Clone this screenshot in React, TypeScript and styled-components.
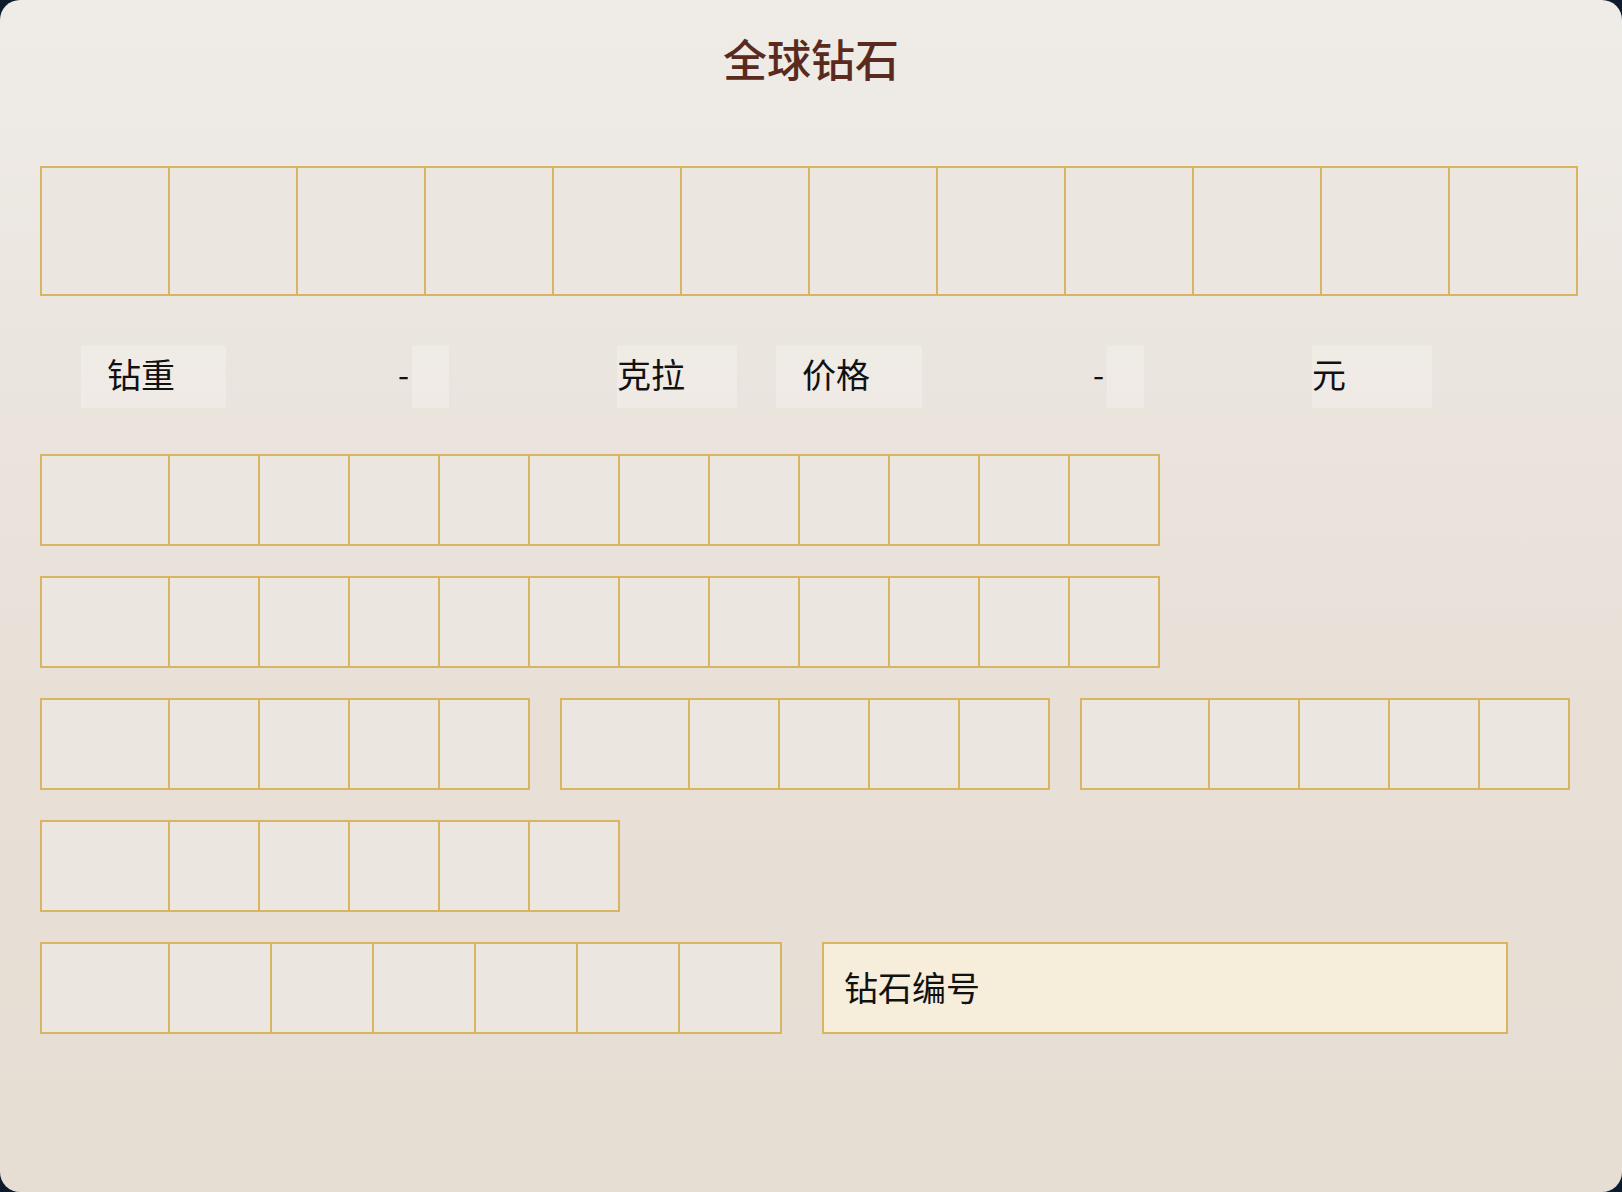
import React from "react";
import styled, { createGlobalStyle } from "styled-components";

const GlobalStyle = createGlobalStyle`
  html, body {
    margin: 0;
    padding: 0;
    background: #0e1b2d;
  }
  * { box-sizing: border-box; }
`;

const GOLD = "#d9b562";
const FONT = `"Noto Sans CJK SC", "Noto Sans", sans-serif`;

const Frame = styled.div`
  width: 1622px;
  height: 1192px;
  border-radius: 20px;
  overflow: hidden;
  background: linear-gradient(180deg, #efece7 0%, #ebe5df 30%, #e8e0d7 60%, #e6ddd3 100%);
  font-family: ${FONT};
`;

const Header = styled.header`
  height: 120px;
  padding-bottom: 4px;
  display: flex;
  align-items: center;
  justify-content: center;
`;

const Title = styled.h1`
  margin: 0;
  font-size: 44px;
  font-weight: 500;
  color: #5b2a1e;
  line-height: 1;
`;

const Board = styled.main`
  display: flex;
  flex-direction: column;
  padding: 46px 40px 0;
`;

const CellRow = styled.div<{ $mt?: number }>`
  display: flex;
  margin-top: ${(p) => p.$mt ?? 0}px;
`;

const Cell = styled.div<{ $w: number; $h: number }>`
  width: ${(p) => p.$w}px;
  height: ${(p) => p.$h}px;
  border: 2px solid ${GOLD};
  background: #ebe6e0;
  flex: none;
  & + & {
    margin-left: -2px;
  }
`;

const FilterBar = styled.div`
  display: flex;
  gap: 39px;
  margin: 50px 0 0 41px;
  height: 62px;
`;

const FilterGroup = styled.div`
  display: flex;
  align-items: stretch;
  width: 656px;
`;

const FieldLabel = styled.span<{ $w: number }>`
  width: ${(p) => p.$w}px;
  padding: 0 0 6px 26px;
  display: flex;
  align-items: center;
  background: rgba(241, 238, 234, 0.6);
  font-size: 34px;
  line-height: 1;
  color: #111;
`;

const BlankInput = styled.input<{ $w: number }>`
  width: ${(p) => p.$w}px;
  border: none;
  outline: none;
  background: transparent;
  padding: 0;
  font-family: ${FONT};
  font-size: 34px;
`;

const Dash = styled.span`
  width: 11px;
  padding-bottom: 9px;
  display: flex;
  align-items: center;
  text-indent: -3px;
  font-size: 32px;
  line-height: 1;
  color: #111;
`;

const DashBox = styled.span`
  width: 37px;
  background: rgba(241, 238, 234, 0.6);
`;

const UnitLabel = styled.span`
  width: 120px;
  padding-bottom: 6px;
  display: flex;
  align-items: center;
  background: rgba(241, 238, 234, 0.6);
  font-size: 34px;
  line-height: 1;
  color: #111;
`;

const SplitRow = styled.div`
  display: flex;
  gap: 30px;
  margin-top: 30px;
`;

const Group = styled.div`
  display: flex;
`;

const BottomRow = styled.div`
  display: flex;
  gap: 40px;
  margin-top: 30px;
`;

const CodeInput = styled.input`
  width: 686px;
  height: 92px;
  border: 2px solid ${GOLD};
  background: #f6eddb;
  padding: 0 0 4px 20px;
  font-family: ${FONT};
  font-size: 34px;
  color: #111;
  outline: none;
  &::placeholder {
    color: #111;
    opacity: 1;
  }
`;

const cells = (widths: number[], h: number) =>
  widths.map((w, i) => <Cell key={i} $w={w} $h={h} />);

const rep = (first: number, w: number, n: number) => [first, ...Array(n).fill(w)];

function Filter({ label, lw, unit }: { label: string; lw: number; unit: string }) {
  return (
    <FilterGroup>
      <FieldLabel $w={lw}>{label}</FieldLabel>
      <BlankInput $w={320 - lw} aria-label={label + " min"} />
      <Dash>-</Dash>
      <DashBox />
      <BlankInput $w={168} aria-label={label + " max"} />
      <UnitLabel>{unit}</UnitLabel>
    </FilterGroup>
  );
}

export default function App() {
  return (
    <>
      <GlobalStyle />
      <Frame>
        <Header>
          <Title>全球钻石</Title>
        </Header>
        <Board>
          <CellRow>{cells(Array(12).fill(130), 130)}</CellRow>
          <FilterBar>
            <Filter label="钻重" lw={145} unit="克拉" />
            <Filter label="价格" lw={146} unit="元" />
          </FilterBar>
          <CellRow $mt={46}>{cells(rep(130, 92, 11), 92)}</CellRow>
          <CellRow $mt={30}>{cells(rep(130, 92, 11), 92)}</CellRow>
          <SplitRow>
            <Group>{cells(rep(130, 92, 4), 92)}</Group>
            <Group>{cells(rep(130, 92, 4), 92)}</Group>
            <Group>{cells(rep(130, 92, 4), 92)}</Group>
          </SplitRow>
          <CellRow $mt={30}>{cells(rep(130, 92, 5), 92)}</CellRow>
          <BottomRow>
            <Group>{cells(rep(130, 104, 6), 92)}</Group>
            <CodeInput placeholder="钻石编号" />
          </BottomRow>
        </Board>
      </Frame>
    </>
  );
}
